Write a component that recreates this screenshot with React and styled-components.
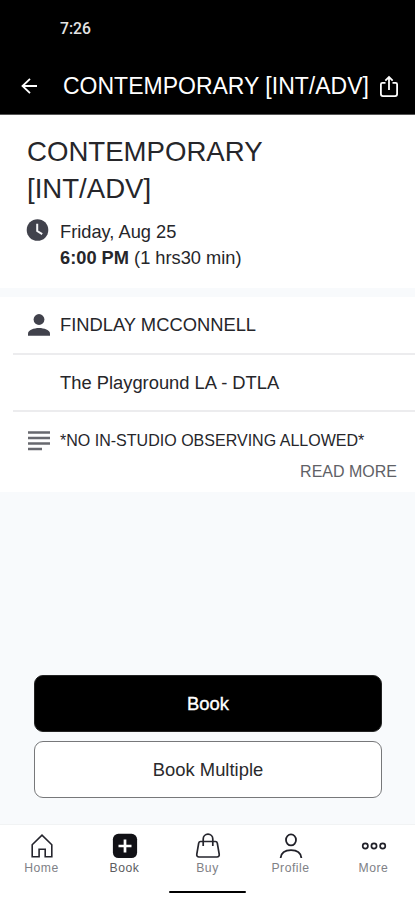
import React from "react";
import styled, { createGlobalStyle } from "styled-components";

const GlobalStyle = createGlobalStyle`
  *, *::before, *::after { box-sizing: border-box; }
  body { margin: 0; background: #f8fafc; }
  button { font: inherit; margin: 0; padding: 0; border: 0; background: none; color: inherit; }
  h1, h2, p { margin: 0; font-weight: 400; }
  svg { display: block; flex: none; }
`;

const Screen = styled.div`
  width: 415px;
  height: 900px;
  display: flex;
  flex-direction: column;
  overflow: hidden;
  background: #f8fafc;
  color: #26262a;
  font-family: "Liberation Sans", Arial, sans-serif;
`;

const StatusBar = styled.div`
  height: 57px;
  padding: 18px 0 0 60px;
  background: #000;
  color: #e4e4e4;
  font: 500 15.7px/21px Roboto, sans-serif;
`;

const Header = styled.header`
  height: 58px;
  display: flex;
  align-items: center;
  padding: 0 15px 0 18px;
  background: #000;
  color: #fff;
  border-bottom: 1px solid #555;
`;

const HeaderTitle = styled.h1`
  flex: 1;
  margin-left: 23px;
  font-size: 23px;
  line-height: 30px;
  white-space: nowrap;
`;

const Summary = styled.section`
  height: 173px;
  padding: 18px 27px 0;
  background: #fff;
`;

const ClassTitle = styled.h2`
  width: 270px;
  font-size: 27.6px;
  line-height: 37px;
`;

const Schedule = styled.div`
  display: flex;
  gap: 11px;
  margin: 12px 0 0 -1px;
  font-size: 18.25px;
  line-height: 25.5px;
`;

const Details = styled.section`
  margin-top: 9px;
  height: 195px;
  padding-left: 13px;
  background: #fff;
`;

const DetailRow = styled.div`
  height: ${(p) => p.$height}px;
  display: flex;
  align-items: center;
  border-bottom: 2px solid #ececee;
  font-size: 18.35px;
`;

const IconSlot = styled.div`
  width: 47px;
  padding-left: 14px;
  flex: none;
`;

const Notes = styled.div`
  display: flex;
  padding-top: 18px;
  font-size: 16.05px;
  line-height: 20px;
`;

const ReadMore = styled.button`
  display: block;
  margin: 10px 18px 0 auto;
  color: #606166;
  font-size: 16px;
  line-height: 20px;
`;

const Actions = styled.div`
  margin-top: auto;
  padding: 0 33px 26px 34px;
  display: grid;
  gap: 9px;
`;

const ActionButton = styled.button`
  && {
    height: 57px;
    border: 1px solid ${(p) => (p.$primary ? "#222" : "#77787a")};
    border-radius: 9px;
    background: ${(p) => (p.$primary ? "#000" : "#fff")};
    color: ${(p) => (p.$primary ? "#fff" : "#2a2a2c")};
    font-size: 18.4px;
    -webkit-text-stroke: ${(p) => (p.$primary ? "0.35px #fff" : "0")};
  }
`;

const TabBar = styled.nav`
  height: 76px;
  display: flex;
  flex-direction: column;
  align-items: center;
  background: #fff;
  border-top: 1px solid #f1f3f4;
`;

const Tabs = styled.div`
  width: 100%;
  display: grid;
  grid-template-columns: repeat(5, 1fr);
`;

const Tab = styled.button`
  && {
    display: flex;
    flex-direction: column;
    align-items: center;
    padding-top: 7px;
    color: ${(p) => (p.$active ? "#5c5c60" : "#808186")};
    font-size: 12.2px;
    line-height: 16px;
    letter-spacing: 0.5px;
  }
`;

const HomeIndicator = styled.div`
  width: 77px;
  height: 2px;
  margin-top: 15px;
  border-radius: 1px;
  background: #000;
`;

const BackIcon = () => (
  <svg width="22" height="22" viewBox="0 0 22 22" fill="none" stroke="#fff" strokeWidth="1.8">
    <path d="M19 11H4.5M12 3.8L4.5 11l7.5 7.2" />
  </svg>
);

const ShareIcon = () => (
  <svg width="22" height="26" viewBox="0 0 22 26" fill="none" stroke="#fff" strokeWidth="1.8">
    <path d="M7.500 9.800H4.400a1.500 1.500 0 0 0-1.500 1.500v9.800a2 2 0 0 0 2 2h12.200a2 2 0 0 0 2-2v-9.800a1.500 1.500 0 0 0-1.500-1.500H14.500" />
    <path d="M11 17V4.500M7.300 7.600l3.700-3.500 3.700 3.500" />
  </svg>
);

const ClockIcon = () => (
  <svg width="23" height="23" viewBox="0 0 23 23">
    <circle cx="11.5" cy="11" r="10.8" fill="#41424c" />
    <path d="M11.2 4.8v7.200l5 3.200" fill="none" stroke="#f6f6f8" strokeWidth="2" />
  </svg>
);

const PersonIcon = () => (
  <svg width="24" height="24" viewBox="0 0 24 24" fill="#41424c">
    <circle cx="12" cy="6.5" r="5.4" />
    <path d="M1 22.800v-2.300c0-3.500 6-5.600 11-5.600s11 2.100 11 5.600v2.300z" />
  </svg>
);

const NotesIcon = () => (
  <svg width="24" height="22" viewBox="0 0 24 22" fill="none" stroke="#68696f" strokeWidth="2.6">
    <path d="M1 2.500h22M1 8h22M1 13.500h22M1 19h14" />
  </svg>
);

const HomeIcon = () => (
  <svg width="28" height="28" viewBox="0 0 28 28" fill="none" stroke="#25252d" strokeWidth="1.6">
    <path d="M4.200 12.800L14 3.200l9.800 9.600v12h-6.600v-7.500h-6.100v7.500h-6.900z" />
  </svg>
);

const BookIcon = () => (
  <svg width="28" height="28" viewBox="0 0 28 28">
    <rect x="1.9" y="1.8" width="24.2" height="24.2" rx="5.5" fill="#111116" />
    <path d="M14 7.500v13M7.500 14h13" stroke="#fff" strokeWidth="2.7" />
  </svg>
);

const BagIcon = () => (
  <svg width="28" height="28" viewBox="0 0 28 28" fill="none" stroke="#25252d" strokeWidth="1.7">
    <path d="M6.600 9.500h14.800c1 0 1.700.6 1.900 1.600l1.900 11.100c.3 1.700-.7 2.800-2.200 2.800H5c-1.500 0-2.500-1.100-2.200-2.800l1.900-11.100c.2-1 .9-1.600 1.900-1.600z" />
    <path d="M9.200 14V7a4.800 4.800 0 0 1 9.600 0v7" />
  </svg>
);

const ProfileIcon = () => (
  <svg width="28" height="28" viewBox="0 0 28 28" fill="none" stroke="#202028" strokeWidth="1.8">
    <ellipse cx="14" cy="7.900" rx="5" ry="5.500" />
    <path d="M3.600 26c.6-5.400 4.700-7.800 10.400-7.800s9.800 2.400 10.400 7.800" />
  </svg>
);

const MoreIcon = () => (
  <svg width="28" height="28" viewBox="0 0 28 28" fill="none" stroke="#202028" strokeWidth="1.7">
    <circle cx="5.300" cy="14" r="2.600" />
    <circle cx="14" cy="14" r="2.600" />
    <circle cx="22.700" cy="14" r="2.600" />
  </svg>
);

const tabs = [
  { label: "Home", Icon: HomeIcon },
  { label: "Book", Icon: BookIcon, active: true },
  { label: "Buy", Icon: BagIcon },
  { label: "Profile", Icon: ProfileIcon },
  { label: "More", Icon: MoreIcon },
];

export default function App() {
  return (
    <>
      <GlobalStyle />
      <Screen>
        <StatusBar>7:26</StatusBar>
        <Header>
          <button aria-label="Back"><BackIcon /></button>
          <HeaderTitle>CONTEMPORARY [INT/ADV]</HeaderTitle>
          <button aria-label="Share"><ShareIcon /></button>
        </Header>
        <Summary>
          <ClassTitle>CONTEMPORARY [INT/ADV]</ClassTitle>
          <Schedule>
            <ClockIcon />
            <div>
              <p>Friday, Aug 25</p>
              <p><b>6:00 PM</b> (1 hrs30 min)</p>
            </div>
          </Schedule>
        </Summary>
        <Details>
          <DetailRow $height={58}>
            <IconSlot><PersonIcon /></IconSlot>
            FINDLAY MCCONNELL
          </DetailRow>
          <DetailRow $height={57}>
            <IconSlot />
            The Playground LA - DTLA
          </DetailRow>
          <Notes>
            <IconSlot><NotesIcon /></IconSlot>
            *NO IN-STUDIO OBSERVING ALLOWED*
          </Notes>
          <ReadMore>READ MORE</ReadMore>
        </Details>
        <Actions>
          <ActionButton $primary>Book</ActionButton>
          <ActionButton>Book Multiple</ActionButton>
        </Actions>
        <TabBar>
          <Tabs>
            {tabs.map(({ label, Icon, active }) => (
              <Tab key={label} $active={active}>
                <Icon />
                {label}
              </Tab>
            ))}
          </Tabs>
          <HomeIndicator />
        </TabBar>
      </Screen>
    </>
  );
}
